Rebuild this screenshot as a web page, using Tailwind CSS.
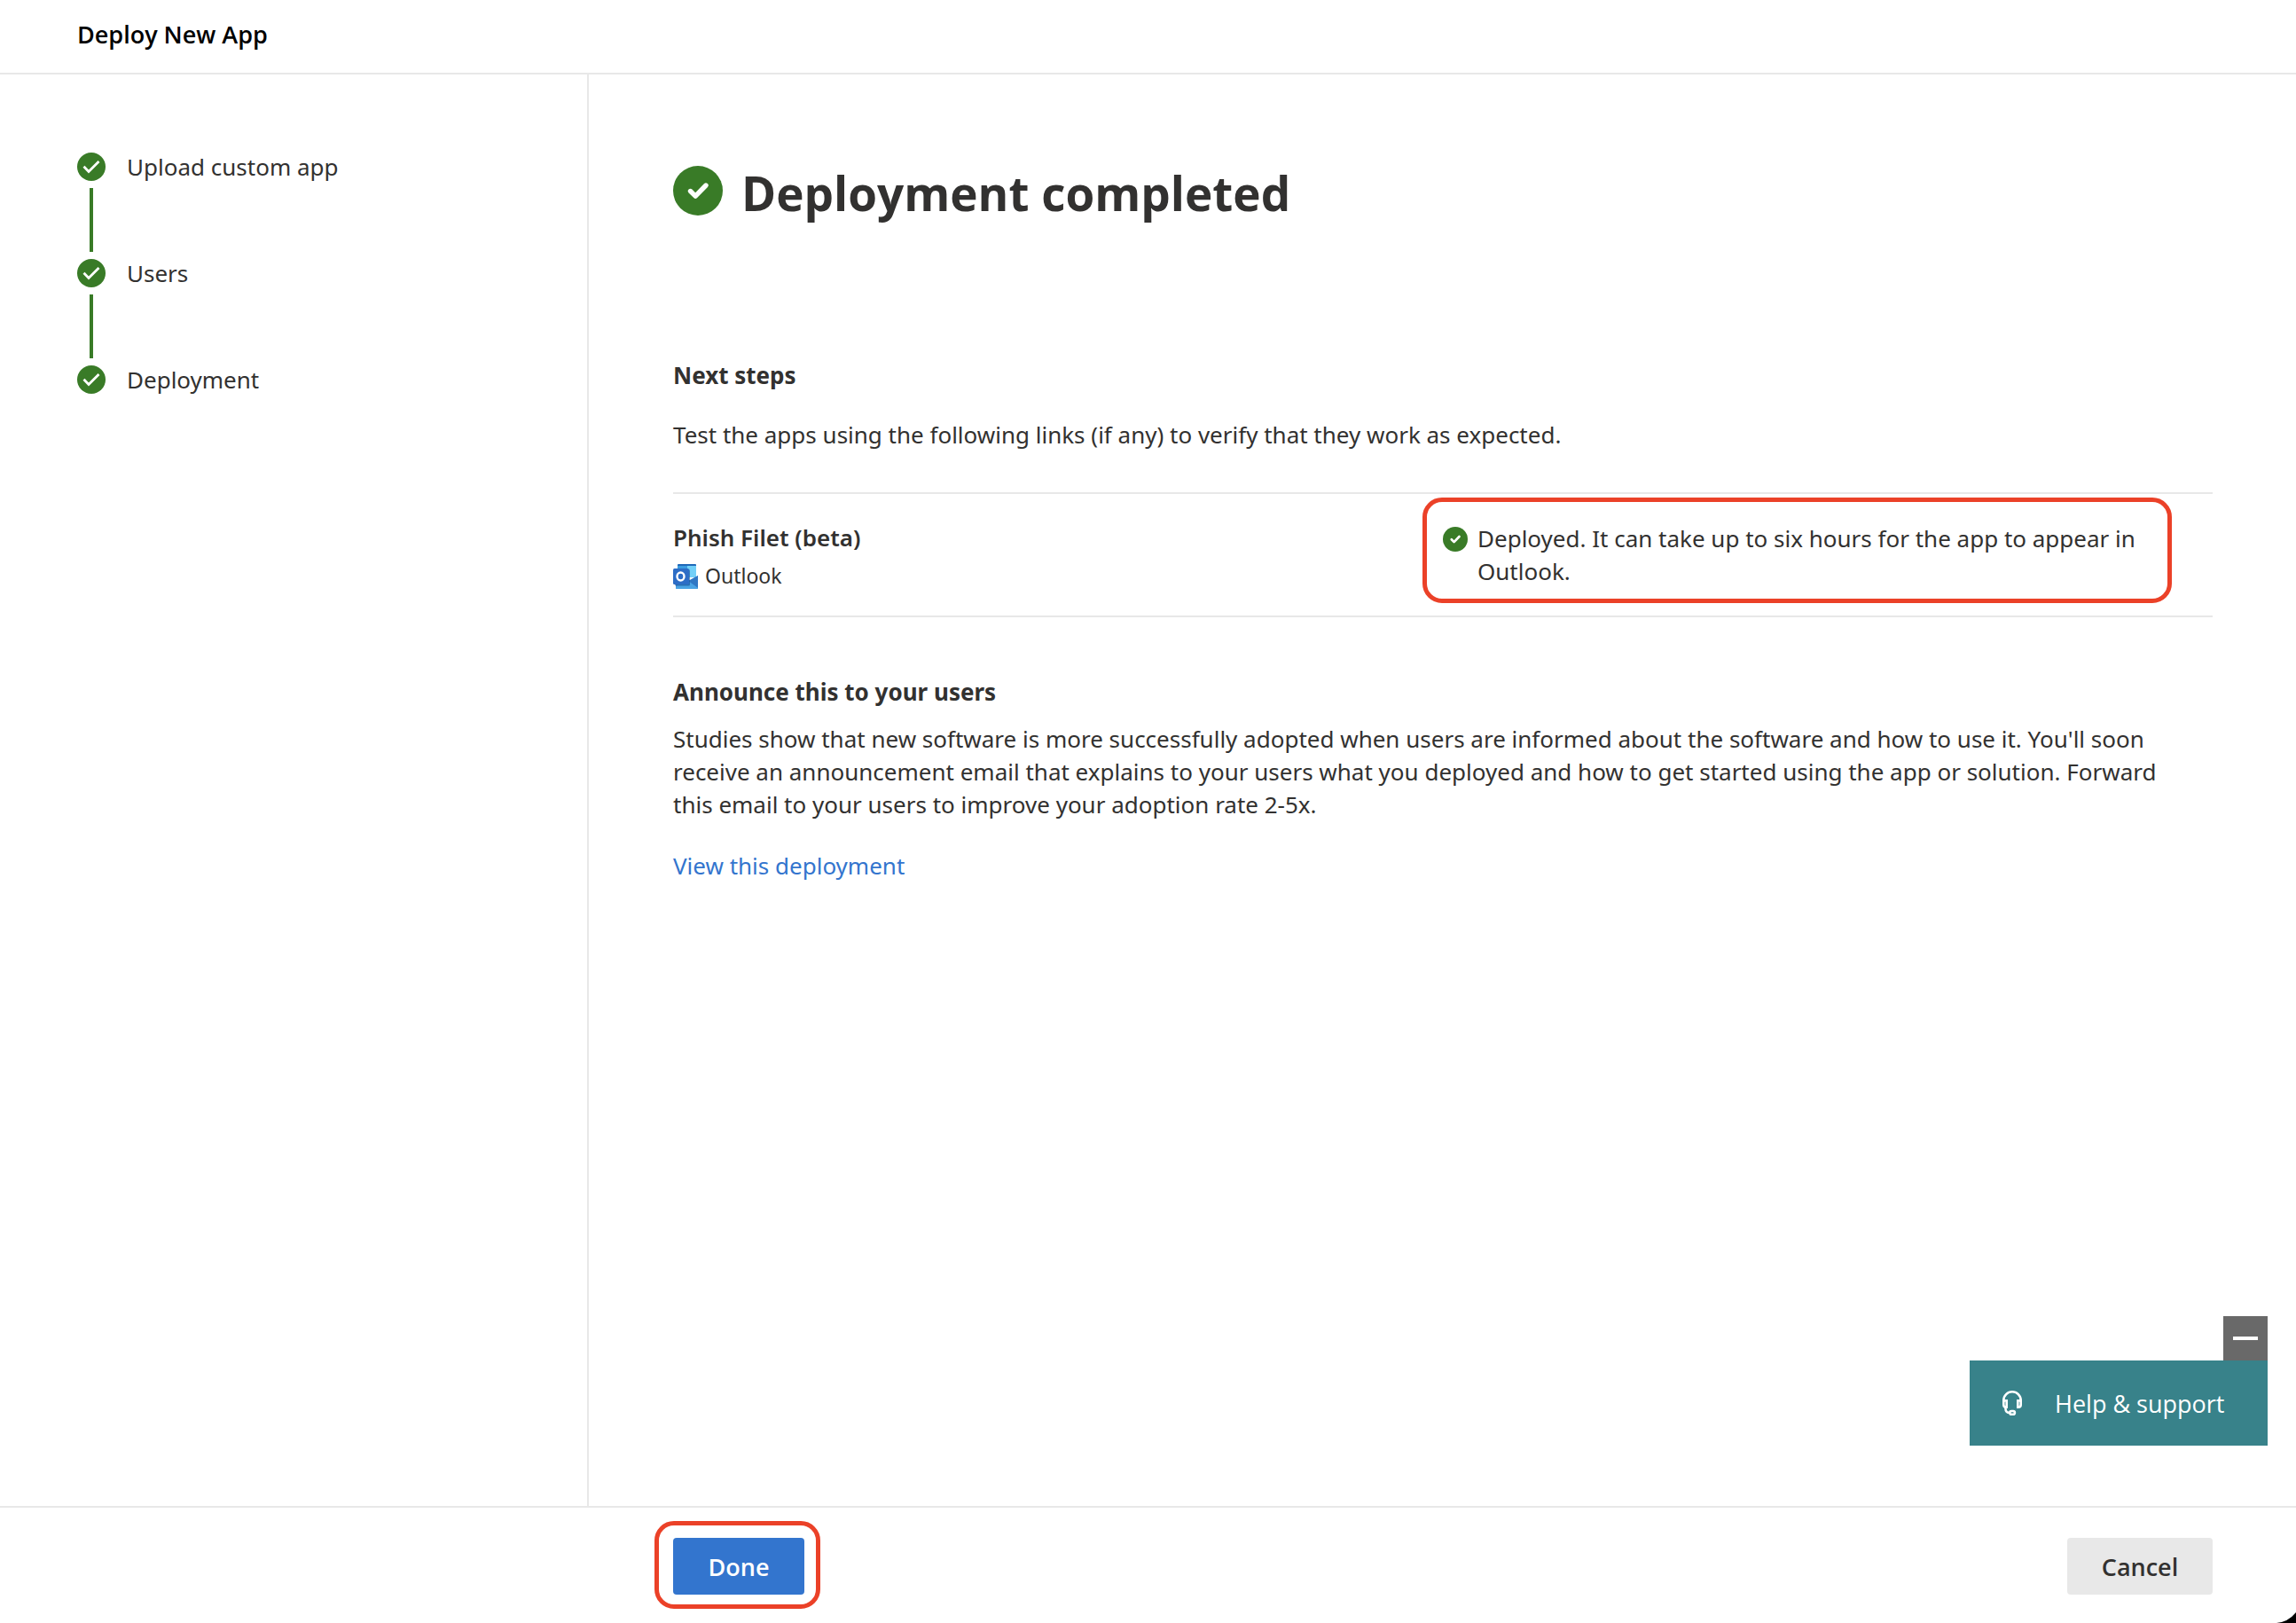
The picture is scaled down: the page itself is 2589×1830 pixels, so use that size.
<!DOCTYPE html>
<html lang="en">
<head>
<meta charset="utf-8">
<meta name="viewport" content="width=device-width, initial-scale=1">
<title>Deploy New App</title>
<script src="https://cdn.jsdelivr.net/npm/@tailwindcss/browser@4"></script>
</head>
<body class="relative flex min-h-screen flex-col bg-white font-['Open_Sans','Noto_Sans',sans-serif] text-[27px] leading-[37px] text-[#323130]">
<svg class="hidden">
  <symbol id="check-step" viewBox="0 0 32 32">
    <circle cx="16" cy="16" r="16" fill="#397b27"/>
    <path d="M7.500 15.800l5.500 5.600L24.500 10" fill="none" stroke="#fff" stroke-width="2.800"/>
  </symbol>
  <symbol id="check-done" viewBox="0 0 56 56">
    <circle cx="28" cy="28" r="28" fill="#397b27"/>
    <path d="M19.500 28.500l5.700 5.700L37 22" fill="none" stroke="#fff" stroke-width="5.400" stroke-linecap="round" stroke-linejoin="round"/>
  </symbol>
</svg>

<header class="h-[84px] border-b-2 border-[#e8e8e8] px-[87px] pt-5">
  <h1 class="font-semibold text-black">Deploy New App</h1>
</header>

<div class="flex grow font-['Noto_Sans','Open_Sans',sans-serif] text-[26px]">
  <nav class="w-[664px] shrink-0 border-r-2 border-[#e8e8e8] pl-[87px] pt-[88px] leading-8" aria-label="Progress">
    <ol>
      <li class="flex gap-6">
        <span class="flex flex-col items-center gap-2 pb-2"><svg class="size-8"><use href="#check-step"/></svg><span class="h-[72px] w-1 bg-[#397b27]"></span></span>
        <span>Upload custom app</span>
      </li>
      <li class="flex gap-6">
        <span class="flex flex-col items-center gap-2 pb-2"><svg class="size-8"><use href="#check-step"/></svg><span class="h-[72px] w-1 bg-[#397b27]"></span></span>
        <span>Users</span>
      </li>
      <li class="flex gap-6">
        <svg class="size-8"><use href="#check-step"/></svg>
        <span>Deployment</span>
      </li>
    </ol>
  </nav>

  <main class="grow pb-24 pl-[95px] pr-[94px] pt-[97px]">
    <div class="flex gap-[21px]">
      <svg class="mt-1.5 size-14 shrink-0"><use href="#check-done"/></svg>
      <h2 class="font-['Open_Sans','Noto_Sans',sans-serif] text-[53px] font-bold leading-[74px]">Deployment completed</h2>
    </div>

    <h3 class="mt-[150px] font-bold">Next steps</h3>
    <p class="mt-[30px]">Test the apps using the following links (if any) to verify that they work as expected.</p>

    <div class="mt-[46px] grid grid-cols-2 border-y-2 border-[#e8e8e8]">
      <div class="pb-[26px] pt-[31px]">
        <h4 class="font-semibold">Phish Filet (beta)</h4>
        <div class="mt-1.5 flex items-center gap-2 text-[23px]">
          <svg class="size-7" viewBox="0 0 28 28">
            <path d="M5 1a1 1 0 0 1 1-1h19a1 1 0 0 1 1 1v14H5z" fill="#1f68b8"/>
            <path d="M5 2h11v13H5z" fill="#3a9be0"/>
            <path d="M16 2h10v13H16z" fill="#73d0f8"/>
            <path d="M28 13v14a1 1 0 0 1-1 1H4a1 1 0 0 1-1-1V17l15 2z" fill="#3f8cd8"/>
            <path d="M28 13L17 19l11 8z" fill="#3077c4"/>
            <path d="M17 19l11 8a1 1 0 0 1-1 1H4a1 1 0 0 1-1-1l1-3z" fill="#4aa3e4"/>
            <rect x="2" y="6" width="17" height="18.500" rx="1.500" fill="#164f91" opacity=".6"/>
            <rect y="5" width="18" height="18" rx="1.500" fill="#2d6dc6"/>
            <ellipse cx="8.500" cy="14" rx="4" ry="4.500" fill="none" stroke="#fff" stroke-width="2.400"/>
          </svg>
          <span>Outlook</span>
        </div>
      </div>
      <div class="relative flex gap-[11px] pr-[46px] pt-8">
        <svg class="mt-[5px] size-7 shrink-0"><use href="#check-done"/></svg>
        <p>Deployed. It can take up to six hours for the app to appear in Outlook.</p>
        <div class="pointer-events-none absolute -left-[23px] bottom-3.5 right-[46px] top-1 rounded-[22px] border-5 border-[#eb4128]"></div>
      </div>
    </div>

    <h3 class="mt-[66px] font-bold">Announce this to your users</h3>
    <p class="mt-4 pr-6">Studies show that new software is more successfully adopted when users are informed about the software and how to use it. You'll soon receive an announcement email that explains to your users what you deployed and how to get started using the app or solution. Forward this email to your users to improve your adoption rate 2-5x.</p>
    <p class="mt-8"><a href="#" class="text-[#3375ce]">View this deployment</a></p>
  </main>
</div>

<footer class="flex h-[132px] items-start justify-between border-t-2 border-[#e8e8e8] pl-[759px] pr-[94px] pt-[34px] font-semibold">
  <div class="relative">
    <button type="button" class="h-16 w-[148px] rounded-sm bg-[#3375ce] text-white">Done</button>
    <div class="pointer-events-none absolute -bottom-4 -left-[21px] -right-[18px] -top-[19px] rounded-[22px] border-5 border-[#eb4128]"></div>
  </div>
  <button type="button" class="h-16 w-[164px] rounded-sm bg-[#e8e8e8]">Cancel</button>
</footer>

<div class="fixed bottom-[200px] right-8 flex flex-col items-end text-white">
  <button type="button" aria-label="Minimize" class="flex size-[50px] items-center justify-center bg-[#696969]"><span class="h-1 w-7 bg-white"></span></button>
  <button type="button" class="flex h-24 w-[336px] items-center gap-[37px] bg-[#38828a] pl-[37px] font-medium">
    <svg class="h-7 w-[22px]" viewBox="0 0 22 28" fill="none" stroke="#fff" stroke-width="2.600">
      <path d="M1.300 13v-2a9.700 9.700 0 0 1 19.400 0v2"/>
      <path d="M1.300 11.300h3.400v7.400H4c-1.800 0-2.700-1-2.700-2.700zM20.700 11.300h-3.400v7.400H18c1.800 0 2.700-1 2.700-2.700z"/>
      <path d="M3.500 18v2.500c0 3 2 4.500 5 4.500"/>
      <rect x="8.300" y="23" width="5.600" height="3.700" rx="1.800"/>
    </svg>
    <span>Help &amp; support</span>
  </button>
</div>

<svg class="fixed bottom-0 right-0 h-3 w-[22px]" viewBox="0 0 22 12"><path d="M0 12Q13 11 22 0V12Z" fill="#000"/></svg>
</body>
</html>
